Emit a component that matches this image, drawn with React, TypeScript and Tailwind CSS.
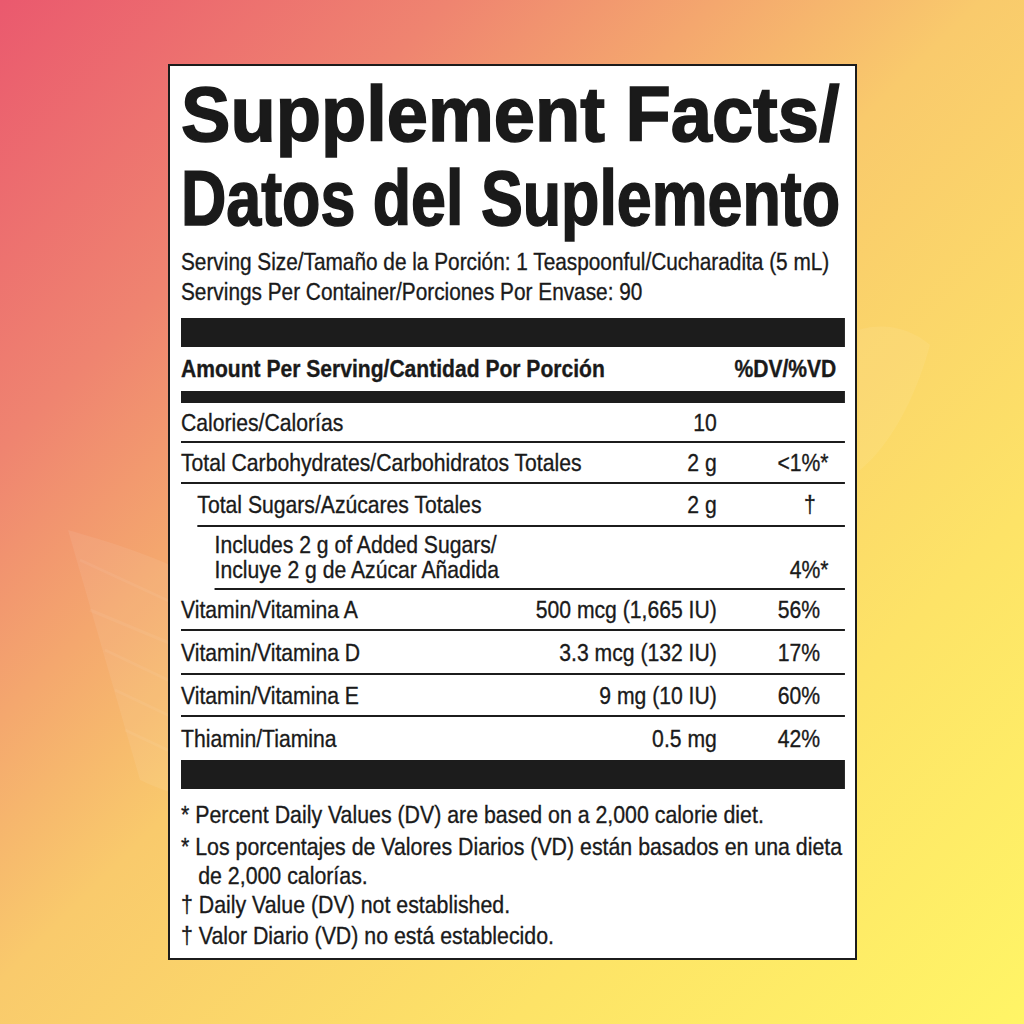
import React from 'react';

interface RowProps {
  label: React.ReactNode;
  amount?: string;
  dv?: React.ReactNode;
  indent?: string;
  height: string;
  line?: boolean;
}

const Star = () => <span className="-mr-[10px]">*</span>;

const Row: React.FC<RowProps> = ({ label, amount, dv, indent = '', height, line = true }) => (
  <div className={`flex items-center ${indent} ${height} ${line ? 'border-b-2 border-[#1c1c1c]' : ''}`}>
    <div className="flex-1 whitespace-nowrap">{label}</div>
    <div className="whitespace-nowrap text-right">{amount}</div>
    <div className="w-[149px] whitespace-nowrap pr-[29px] text-right">{dv}</div>
  </div>
);

const Wings = () => (
  <svg className="absolute inset-0 h-full w-full" viewBox="0 0 1024 1024" fill="none">
    <g opacity="0.07" fill="#ffffff">
      <path d="M68 530 C120 545 170 560 215 590 L215 800 C190 800 160 790 140 780 Z" />
      <path d="M858 330 C885 322 910 328 930 345 C915 400 890 445 860 470 Z" />
    </g>
    <g opacity="0.05" stroke="#ffffff" strokeWidth="3">
      <path d="M80 560 L210 620" />
      <path d="M90 610 L210 660" />
      <path d="M105 650 L210 700" />
      <path d="M115 690 L210 735" />
      <path d="M125 730 L210 770" />
    </g>
  </svg>
);

const App: React.FC = () => {
  return (
    <div className="relative flex h-[1024px] w-[1024px] items-center justify-center overflow-hidden bg-[linear-gradient(135deg,#ea596e_0%,#ef8470_22%,#f9ca6c_48%,#fde367_75%,#fff566_100%)]">
      <Wings />
      <div
        className="relative w-[689px] border-2 border-[#1c1c1c] bg-white pb-[8px] pl-[11px] pr-[10px] pt-[6px] text-[#1a1a1a]"
        style={{ fontFamily: '"Liberation Sans", Arial, sans-serif' }}
      >
        <h1 className="whitespace-nowrap text-[77px] font-bold leading-[84px] [-webkit-text-stroke:1.6px_#1a1a1a]">
          <div className="w-[686px] origin-left scale-x-[0.962]">Supplement Facts/</div>
          <div className="w-[815px] origin-left scale-x-[0.815]">Datos del Suplemento</div>
        </h1>

        <div className="w-[772px] origin-left scale-x-[0.86] [-webkit-text-stroke:0.35px_#1a1a1a]">
          <div className="mt-[7px] whitespace-nowrap text-[24.2px] leading-[30px]">
            <div>Serving Size/Tamaño de la Porción: 1 Teaspoonful/Cucharadita (5 mL)</div>
            <div>Servings Per Container/Porciones Por Envase: 90</div>
          </div>

          <div className="mt-[11px] h-[29px] bg-[#1c1c1c]" />

          <div className="flex h-[44px] items-center justify-between pr-[10px] text-[24.5px] font-bold">
            <span>Amount Per Serving/Cantidad Por Porción</span>
            <span>%DV/%VD</span>
          </div>

          <div className="h-[12px] bg-[#1c1c1c]" />

          <div className="text-[24.6px] leading-[25px]">
            <Row height="h-[40px]" label="Calories/Calorías" amount="10" />
            <Row
              height="h-[41px]"
              label="Total Carbohydrates/Carbohidratos Totales"
              amount="2 g"
              dv={<>&lt;1%<Star /></>}
            />
            <Row
              height="h-[43px]"
              indent="ml-[19px]"
              label="Total Sugars/Azúcares Totales"
              amount="2 g"
              dv={<span className="mr-[5px]">†</span>}
            />
            <div className="ml-[39px] flex h-[63px] items-end border-b-2 border-[#1c1c1c] pb-[6px]">
              <div className="flex-1 whitespace-nowrap">
                <div>Includes 2 g of Added Sugars/</div>
                <div>Incluye 2 g de Azúcar Añadida</div>
              </div>
              <div className="w-[149px] pr-[29px] text-right">
                4%<Star />
              </div>
            </div>
            <Row height="h-[41px]" label="Vitamin/Vitamina A" amount="500 mcg (1,665 IU)" dv="56%" />
            <Row height="h-[44px]" label="Vitamin/Vitamina D" amount="3.3 mcg (132 IU)" dv="17%" />
            <Row height="h-[42px]" label="Vitamin/Vitamina E" amount="9 mg (10 IU)" dv="60%" />
            <Row height="h-[43px]" label="Thiamin/Tiamina" amount="0.5 mg" dv="42%" line={false} />
          </div>

          <div className="h-[29px] bg-[#1c1c1c]" />

          <div className="mt-[11px] whitespace-nowrap text-[24.8px] leading-[29px]">
            <p>* Percent Daily Values (DV) are based on a 2,000 calorie diet.</p>
            <p className="mt-[3px] pl-[20px] -indent-[20px]">
              * Los porcentajes de Valores Diarios (VD) están basados en una dieta
              <br />
              de 2,000 calorías.
            </p>
            <p>† Daily Value (DV) not established.</p>
            <p className="mt-[2px]">† Valor Diario (VD) no está establecido.</p>
          </div>
        </div>
      </div>
    </div>
  );
};

export default App;
